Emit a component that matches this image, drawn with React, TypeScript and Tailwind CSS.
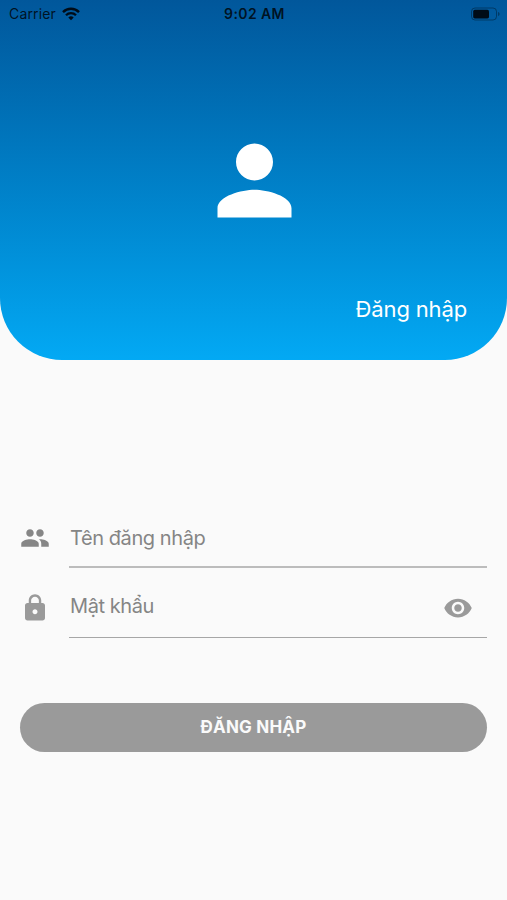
import type { ReactNode } from "react";
import { MdGroup, MdLock, MdPerson, MdRemoveRedEye } from "react-icons/md";

function StatusBar() {
  return (
    <div className="grid h-7 grid-cols-3 items-center pl-[9px] pr-[7px] text-black/80">
      <div className="flex items-center gap-[6px]">
        <span className="text-[14px] leading-7 tracking-[0.15px]">Carrier</span>
        <svg width="18" height="14" viewBox="0 0 18 14" fill="none" stroke="#000c18">
          <path d="M1 5.1a11.3 11.3 0 0 1 16 0" strokeWidth="2.4" />
          <path d="M4 8.2a7 7 0 0 1 10 0" strokeWidth="2.3" />
          <path d="M9 13.3 6.3 10.6a3.8 3.8 0 0 1 5.4 0z" fill="#000c18" stroke="none" />
        </svg>
      </div>
      <span className="text-center text-[14px] leading-7 font-semibold tracking-[0.4px]">9:02 AM</span>
      <svg className="justify-self-end" width="30" height="14" viewBox="0 0 30 14">
        <rect x="1.5" y="1" width="25" height="12" rx="3.5" fill="none" stroke="#000" strokeOpacity="0.35" />
        <rect x="3.2" y="2.8" width="15.8" height="8.6" rx="1.6" fill="#000c18" />
        <path d="M28 5v4c1-.4 1.6-1.1 1.6-2S29 5.400 28 5z" fill="#000" fillOpacity="0.35" />
      </svg>
    </div>
  );
}

interface FieldProps {
  icon: ReactNode;
  label: string;
  labelClass: string;
  lineClass: string;
  trailing?: ReactNode;
}

function Field({ icon, label, labelClass, lineClass, trailing }: FieldProps) {
  return (
    <div className="flex h-[60px] items-center gap-[19px]">
      <div className="shrink-0">{icon}</div>
      <div className={`flex h-full flex-1 items-center justify-between pr-[14px] ${lineClass}`}>
        <span className={labelClass}>{label}</span>
        {trailing}
      </div>
    </div>
  );
}

export default function App() {
  return (
    <div className="min-h-[900px] bg-[#fafafa] font-['Inter','Noto_Sans',sans-serif]">
      <header className="flex h-[360px] flex-col rounded-b-[62px] bg-linear-to-b from-[#01579b] to-[#03a9f4]">
        <StatusBar />
        <div className="flex justify-center pt-[97px] pl-px text-white">
          <MdPerson size={111} />
        </div>
        <h1 className="mt-auto pr-10 pb-[35px] text-right text-[22px] leading-8 tracking-[-0.15px] text-white">
          Đăng nhập
        </h1>
      </header>

      <form className="px-5 pt-[148px]">
        <Field
          icon={<MdGroup size={30} className="text-[#868686]" />}
          label="Tên đăng nhập"
          labelClass="pt-px pl-px text-[20px] leading-7 tracking-[-0.42px] text-[#858585]"
          lineClass="border-b-2 border-[#bcbcbc]"
        />
        <div className="mt-[10px]">
          <Field
            icon={<MdLock size={30} className="text-[#9a9a9a]" />}
            label="Mật khẩu"
            labelClass="-mt-1 pl-px text-[20px] leading-7 tracking-[-0.42px] text-[#858585]"
            lineClass="border-b border-[#a6a6a6]"
            trailing={<MdRemoveRedEye size={30} className="text-[#9a9a9a]" />}
          />
        </div>
        <button
          type="button"
          className="mt-[65px] h-[49px] w-full rounded-full bg-[#9a9a9a] pt-px text-[17px] font-bold tracking-[0.2px] text-[#fafafa]"
        >
          ĐĂNG NHẬP
        </button>
      </form>
    </div>
  );
}
